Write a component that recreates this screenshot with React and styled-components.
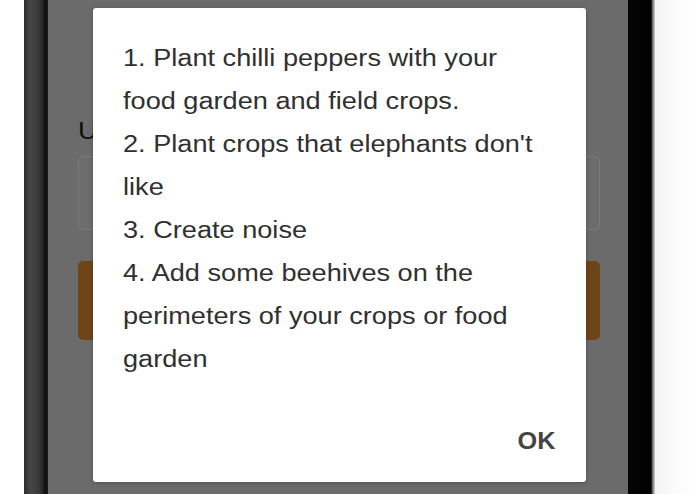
import React from 'react';
import styled, { createGlobalStyle } from 'styled-components';

const tips = [
  '1. Plant chilli peppers with your food garden and field crops.',
  "2. Plant crops that elephants don't like",
  '3. Create noise',
  '4. Add some beehives on the perimeters of your crops or food garden',
];

// the screen in the shot is stretched sideways, so the type is too
const STRETCH = 1.18;

const GlobalStyle = createGlobalStyle`
  html, body {
    margin: 0;
    padding: 0;
    background: #ffffff;
    overflow: hidden;
  }
  * {
    box-sizing: border-box;
  }
`;

export default function App() {
  return (
    <>
      <GlobalStyle />
      <Stage>
        <Margin />
        <BezelLeft />
        <Screen>
          <Page>
            <Label>U</Label>
            <Input />
            <LoginButton />
          </Page>

          <Backdrop>
            <Dialog>
              <TipList>
                {tips.map((tip) => (
                  <Tip key={tip}>{tip}</Tip>
                ))}
              </TipList>
              <Actions>
                <OkButton>OK</OkButton>
              </Actions>
            </Dialog>
          </Backdrop>
        </Screen>
        <BezelRight />
        <Desk />
      </Stage>
    </>
  );
}

const Stage = styled.div`
  display: flex;
  flex-direction: row;
  width: 695px;
  height: 494px;
  font-family: "Liberation Sans", Arial, sans-serif;
`;

const Margin = styled.div`
  width: 24px;
  background: #ffffff;
`;

const BezelLeft = styled.div`
  width: 24px;
  background: linear-gradient(
    to right,
    #2c2c2c 0%,
    #464646 25%,
    #3a3a3a 60%,
    #262626 78%,
    #0d0d0d 88%,
    #1a1a1a 100%
  );
`;

const Screen = styled.div`
  position: relative;
  width: 580px;
  background: #e0e0e0;
  overflow: hidden;
`;

const Page = styled.div`
  display: flex;
  flex-direction: column;
  align-items: stretch;
  padding: 118px 28px 0 30px;
`;

const Label = styled.span`
  align-self: flex-start;
  font-size: 23px;
  line-height: 27px;
  color: #222;
  margin-bottom: 11px;
  transform: scaleX(${STRETCH});
  transform-origin: left center;
`;

const Input = styled.div`
  height: 74px;
  border: 1.5px solid #ffffff;
  border-radius: 5px;
  background: #e2e2e2;
  margin-bottom: 31px;
`;

const LoginButton = styled.div`
  height: 79px;
  border-radius: 5px;
  background: #e78e32;
`;

const Backdrop = styled.div`
  position: absolute;
  inset: 0;
  background: rgba(0, 0, 0, 0.52);
  display: flex;
  padding: 8px 42px 12px 45px;
`;

const Dialog = styled.div`
  flex: 1;
  display: flex;
  flex-direction: column;
  background: #ffffff;
  border-radius: 3px;
  box-shadow: 0 1px 4px rgba(0, 0, 0, 0.25);
  padding: 29px 31px 29px 30px;
`;

const TipList = styled.div`
  width: 360px;
  font-size: 23px;
  line-height: 43px;
  color: #303030;
  transform: scaleX(${STRETCH});
  transform-origin: left top;
`;

const Tip = styled.div``;

const Actions = styled.div`
  display: flex;
  justify-content: flex-end;
  margin-top: 46px;
`;

const OkButton = styled.button`
  border: 0;
  padding: 0;
  background: none;
  font-family: inherit;
  font-size: 23px;
  line-height: 28px;
  font-weight: bold;
  color: #444;
  cursor: pointer;
  transform: scaleX(1.1);
  transform-origin: right center;
`;

const BezelRight = styled.div`
  width: 27px;
  background: linear-gradient(
    to right,
    #060606 0%,
    #000000 85%,
    #7a7a7a 92%,
    #d8d8d8 100%
  );
`;

const Desk = styled.div`
  flex: 1;
  background: linear-gradient(to right, #f3f3f3 0%, #fafafa 40%, #ffffff 100%);
`;
